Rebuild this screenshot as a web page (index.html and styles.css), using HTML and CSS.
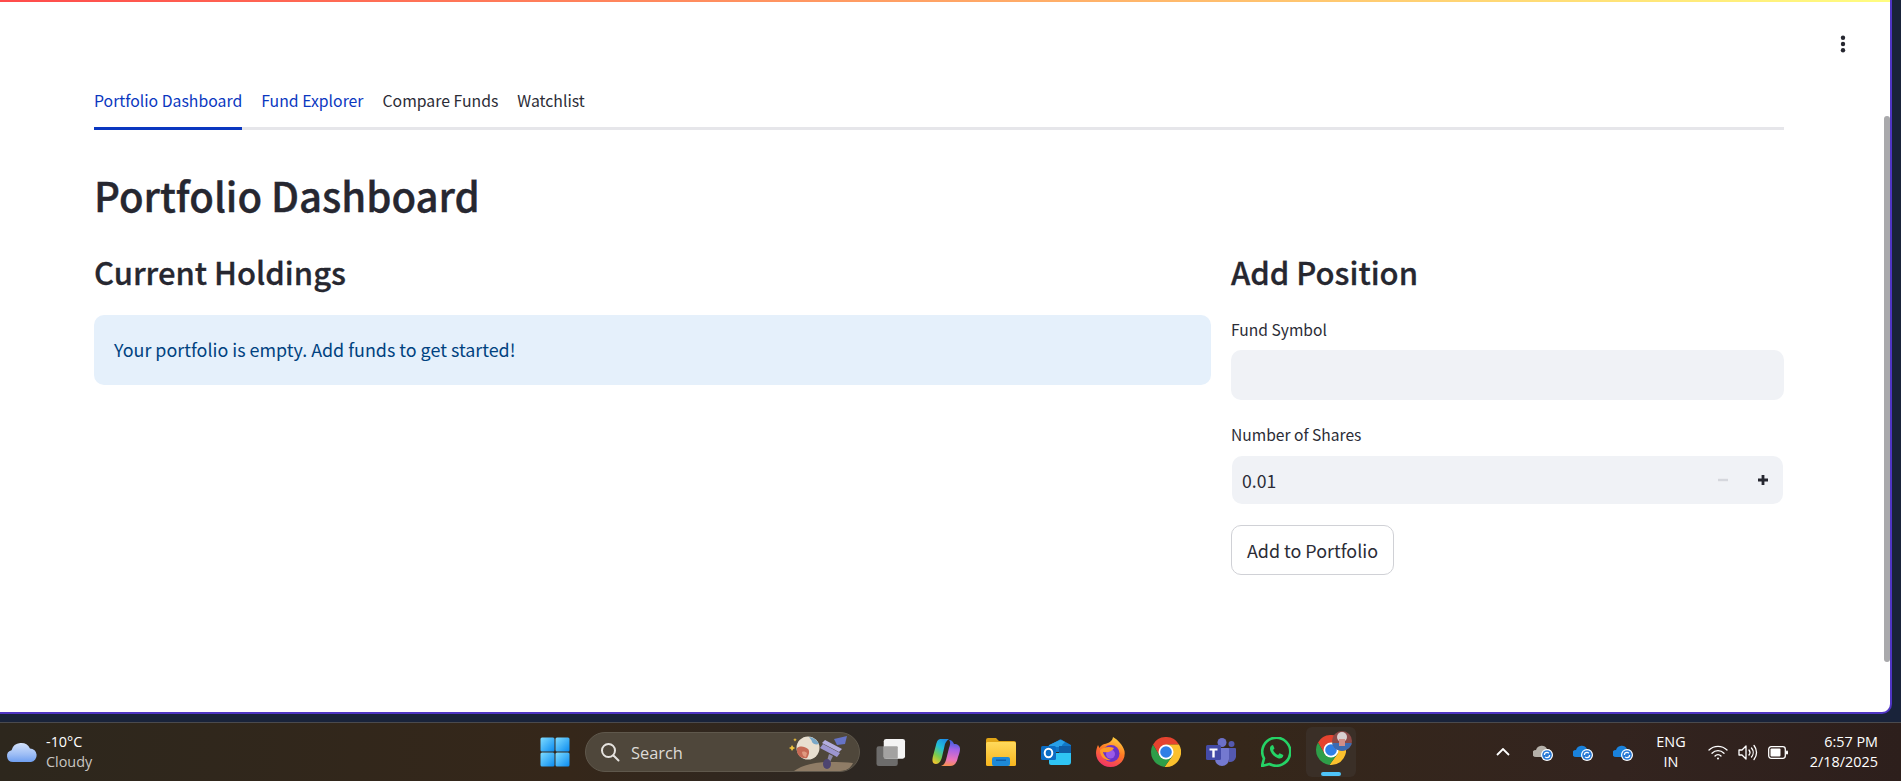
FILE: index.html
```html
<!DOCTYPE html>
<html lang="en">
<head>
<meta charset="utf-8">
<title>Portfolio Dashboard</title>
<link rel="stylesheet" href="styles.css">
</head>
<body>
<div class="window">
  <div class="rainbow"></div>
  <div class="app">
    <div class="toolbar">
      <svg class="kebab" width="8" height="18" viewBox="0 0 8 18"><circle cx="4" cy="2.8" r="2.2"/><circle cx="4" cy="9" r="2.2"/><circle cx="4" cy="15.2" r="2.2"/></svg>
    </div>
    <main class="content">
      <nav class="tabs">
        <a class="tab active">Portfolio Dashboard</a>
        <a class="tab hover">Fund Explorer</a>
        <a class="tab">Compare Funds</a>
        <a class="tab">Watchlist</a>
      </nav>
      <h1 class="title">Portfolio Dashboard</h1>
      <div class="columns">
        <section class="col-main">
          <h2 class="heading">Current Holdings</h2>
          <div class="info"><span class="info-text">Your portfolio is empty. Add funds to get started!</span></div>
        </section>
        <section class="col-side">
          <h2 class="heading">Add Position</h2>
          <label class="label label-first">Fund Symbol</label>
          <div class="field"></div>
          <label class="label label-second">Number of Shares</label>
          <div class="field number">
            <span class="num-value">0.01</span>
            <span class="step off"><svg width="12" height="12" viewBox="0 0 12 12"><rect x="1" y="4.800" width="10" height="2.400"/></svg></span>
            <span class="step"><svg width="12" height="12" viewBox="0 0 12 12"><path d="M4.600 1h2.800v3.600H11v2.800H7.400V11H4.600V7.400H1V4.600h3.600z"/></svg></span>
          </div>
          <button class="btn">Add to Portfolio</button>
        </section>
      </div>
    </main>
    <div class="scrollbar"><div class="thumb"></div></div>
  </div>
</div>
<footer class="taskbar">
  <div class="weather">
    <svg width="32" height="22" viewBox="0 0 32 22"><defs><linearGradient id="cl" x1="0" y1="0" x2="0" y2="1"><stop offset="0" stop-color="#d3e2fb"/><stop offset="0.6" stop-color="#9dbdf5"/><stop offset="1" stop-color="#6f9ff0"/></linearGradient></defs><path d="M7 21a6 6 0 0 1-1.500-11.800A10 10 0 0 1 24 7.500 6.800 6.800 0 0 1 25 21z" fill="url(#cl)"/></svg>
    <div class="weather-text"><span class="temp">-10°C</span><span class="cond">Cloudy</span></div>
  </div>
  <div class="center">
    <span class="slot start"><svg width="30" height="30" viewBox="0 0 30 30"><defs><linearGradient id="wi" x1="0" y1="0" x2="1" y2="1"><stop offset="0" stop-color="#7fdcff"/><stop offset="1" stop-color="#0a8bf0"/></linearGradient></defs><g fill="url(#wi)"><rect x="0.5" y="0.5" width="14" height="14" rx="1.5"/><rect x="15.5" y="0.5" width="14" height="14" rx="1.5"/><rect x="0.5" y="15.5" width="14" height="14" rx="1.5"/><rect x="15.5" y="15.5" width="14" height="14" rx="1.5"/></g></svg></span>
    <div class="search">
      <svg width="20" height="20" viewBox="0 0 20 20" fill="none" stroke="#e6e3df" stroke-width="2"><circle cx="8.5" cy="8.5" r="6.5"/><path d="M13.5 13.5l5 5" stroke-linecap="round"/></svg>
      <span class="search-text">Search</span>
      <svg class="search-art" width="68" height="38" viewBox="0 0 68 38"><path d="M8 38c8-6 22-9 35-9 10 0 18 0 24 1-2 4-5 7-10 8z" fill="#8f7c66"/><circle cx="22" cy="15" r="11.500" fill="#e8dfd0"/><path d="M11 15c4-3 8-1 11 1 2 2 1 6-1 9-5 1-9-2-10-6z" fill="#c56a55"/><path d="M23 4c4 0 8 3 10 7-3 1-6 0-7-2 0-2-2-3-3-5z" fill="#7aa8c8"/><path d="M16 19c2-1 4 0 5 1l-1 4c-2 0-4-2-4-5z" fill="#e09a80"/><path d="M6 12l1.300 2 2 1-2 1-1.300 2-1.100-2-2-1 2-1z" fill="#f0c33c"/><path d="M9 5l.6 1.200 1.200.6-1.200.6L9 8.600l-.6-1.200-1.200-.6 1.200-.6z" fill="#f0c33c"/><path d="M36 10l3-3 17 9-3 3z" fill="#b4aee0"/><path d="M34 15l3-4 17 9-3 4z" fill="#9c95d0"/><path d="M48 6l13-3-2 8-8 1z" fill="#6673c6"/><path d="M43 21l4 2-3 6-3-1z" fill="#8c88a8"/><ellipse cx="41" cy="31" rx="4" ry="5" fill="#4d4470"/></svg>
    </div>
    <span class="slot taskview"><svg width="31" height="29" viewBox="0 0 31 29"><rect x="0.500" y="8" width="22" height="20.500" rx="2.500" fill="#6d6c6b"/><rect x="8" y="0.500" width="22" height="20.500" rx="2.500" fill="#f4f4f4"/><rect x="8" y="8" width="14.500" height="13" rx="1" fill="#a3a2a1"/></svg></span>
    <span class="slot"><svg width="28" height="27" viewBox="0 0 28 27"><defs><linearGradient id="co1" x1="0.700" y1="0" x2="0.200" y2="1"><stop offset="0" stop-color="#1d8fe8"/><stop offset="0.350" stop-color="#22c0d8"/><stop offset="0.700" stop-color="#7ccb4c"/><stop offset="1" stop-color="#f2c62e"/></linearGradient><linearGradient id="co2" x1="0.500" y1="0" x2="0.400" y2="1"><stop offset="0" stop-color="#3360e0"/><stop offset="0.350" stop-color="#a662e6"/><stop offset="0.750" stop-color="#ec74b8"/><stop offset="1" stop-color="#f59050"/></linearGradient></defs><path d="M9 0h8c-2 1-3 3-4 5l-3 13c-1 4-3 7-6 7-4 0-4-4-3-8L4 6C5 2 6 0 9 0z" fill="url(#co1)"/><path d="M17 1c3 0 4 2 5 4 4 0 6 2 6 5s-1 5-2 8c-1 5-3 9-8 9h-9c3-1 4-3 5-6l3-12c1-3 2-6 0-8z" fill="url(#co2)"/></svg></span>
    <span class="slot"><svg width="30" height="28" viewBox="0 0 30 28"><defs><linearGradient id="fo" x1="0" y1="0" x2="0" y2="1"><stop offset="0" stop-color="#ffd95c"/><stop offset="1" stop-color="#f6b51e"/></linearGradient></defs><path d="M0 2a2 2 0 0 1 2-2h8l3 3h15a2 2 0 0 1 2 2v3H0z" fill="#e0a416"/><rect y="4" width="30" height="24" rx="1.500" fill="url(#fo)"/><rect x="6" y="19" width="18" height="9" rx="2" fill="#1d89d8"/><rect x="10" y="21.500" width="10" height="1.500" fill="#0f5fa8"/></svg></span>
    <span class="slot"><svg width="30" height="26" viewBox="0 0 30 26"><path d="M7 7l11-6c1-1 2-1 3 0l9 5v7H7z" fill="#1178c8"/><path d="M8 6l11-5c1 0 2 0 3 1l2 1-3 3v2H8z" fill="#28a0e8"/><path d="M18 7h12v7H18z" fill="#0f5da6"/><path d="M8 14h22v9a3 3 0 0 1-3 3H10a2 2 0 0 1-2-2z" fill="#2fc4f4"/><rect y="7" width="15" height="14" rx="1.500" fill="#0c6dc4"/><ellipse cx="7.500" cy="14" rx="3.800" ry="4.300" fill="none" stroke="#fff" stroke-width="2"/></svg></span>
    <span class="slot"><svg width="29" height="30" viewBox="0 0 29 30"><defs><linearGradient id="ff" x1="0.700" y1="0" x2="0.300" y2="1"><stop offset="0" stop-color="#ffd23e"/><stop offset="0.450" stop-color="#ff7a24"/><stop offset="1" stop-color="#f0306a"/></linearGradient></defs><path d="M17 0c5 3 10 8 11.500 14C30 23 23 30 14.500 30 6.500 30 0 24 0 16c0-3 1-6 2-8l1.500 3c1-2 3-3.500 5-4 3.500-.5 8-2.500 8.500-7z" fill="url(#ff)"/><circle cx="15" cy="16.500" r="8.500" fill="#6a32c8"/><circle cx="14.500" cy="17" r="4.500" fill="#9a5ae8"/><path d="M4 13c4-3 9-4 14-2-2 3-5 5-11 4 1 4 4 7 8 8-6 1-11-3-11-10z" fill="#ff9a26"/></svg></span>
    <span class="slot"><svg width="30" height="30" viewBox="0 0 30 30"><path d="M15 7.500H28A15 15 0 0 0 2 7.500L8.500 18.800z" fill="#e5432f"/><path d="M15 7.500H28A15 15 0 0 1 13.500 29.900L21.500 18.800z" fill="#fbc02d"/><path d="M8.500 18.800L2 7.500A15 15 0 0 0 13.500 29.900L21.500 18.800z" fill="#2e9e49"/><circle cx="15" cy="15" r="7.500" fill="#fff"/><circle cx="15" cy="15" r="5.800" fill="#2f7fe6"/></svg></span>
    <span class="slot"><svg width="30" height="28" viewBox="0 0 30 28"><circle cx="16" cy="4.500" r="4.500" fill="#6c70c8"/><circle cx="25.500" cy="6" r="3" fill="#5459b0"/><path d="M21 10h8a1 1 0 0 1 1 1v8a6 6 0 0 1-7 5z" fill="#5459b0"/><path d="M9 10h13a1 1 0 0 1 1 1v10a7 7 0 0 1-14 0z" fill="#7479d0"/><rect y="7" width="15" height="15" rx="1.500" fill="#444ba8"/><path d="M3.500 10.500h8v2H8.700v7H6.300v-7H3.500z" fill="#fff"/></svg></span>
    <span class="slot"><svg width="30" height="30" viewBox="0 0 30 30"><path d="M1 29l2-7.500A14 14 0 1 1 8.500 27z" fill="none" stroke="#25d366" stroke-width="2.600" stroke-linejoin="round"/><path d="M10.500 8.500c-1.500 1-2 3-1 5.500 1.500 3.500 4 6 7.500 7.200 2.300.8 4.300 0 5-1.700l.3-1.500-3.700-1.800-1.500 1.800c-2.300-.8-4-2.600-5-5l1.400-1.500-1.500-3.500z" fill="#25d366"/></svg></span>
    <span class="slot current">
      <svg width="30" height="30" viewBox="0 0 30 30"><path d="M15 7.500H28A15 15 0 0 0 2 7.500L8.500 18.800z" fill="#e5432f"/><path d="M15 7.500H28A15 15 0 0 1 13.500 29.900L21.500 18.800z" fill="#fbc02d"/><path d="M8.500 18.800L2 7.500A15 15 0 0 0 13.500 29.900L21.500 18.800z" fill="#2e9e49"/><circle cx="15" cy="15" r="7.500" fill="#fff"/><circle cx="15" cy="15" r="5.800" fill="#2f7fe6"/></svg>
      <svg class="avatar" width="20" height="20" viewBox="0 0 20 20"><defs><clipPath id="av"><circle cx="10" cy="10" r="10"/></clipPath></defs><g clip-path="url(#av)"><rect width="20" height="20" fill="#8c4a48"/><rect y="12" width="20" height="8" fill="#3d6bb0"/><circle cx="10" cy="6" r="5" fill="#d9cfd0"/><rect x="7" y="8" width="6" height="7" fill="#d08e88"/></g></svg>
      <span class="indicator"></span>
    </span>
  </div>
  <div class="tray">
    <svg class="caret" width="14" height="8" viewBox="0 0 14 8" fill="none" stroke="#fff" stroke-width="1.800"><path d="M1 7l6-6 6 6"/></svg>
    <span class="cloud-icon first"><svg width="20" height="17" viewBox="0 0 20 17"><path d="M3 13a3.500 3.500 0 0 1 0-7 6 6 0 0 1 11-1 4 4 0 0 1 1 8z" fill="#b5b0a9"/><circle cx="14" cy="11" r="6" fill="#fff"/><circle cx="14" cy="11" r="4.800" fill="#2a7ad6"/><circle cx="14" cy="11" r="2.600" fill="none" stroke="#fff" stroke-width="1.200" stroke-dasharray="6 2"/></svg></span>
    <span class="cloud-icon"><svg width="20" height="17" viewBox="0 0 20 17"><path d="M3 13a3.500 3.500 0 0 1 0-7 6 6 0 0 1 11-1 4 4 0 0 1 1 8z" fill="#1a82dc"/><circle cx="14" cy="11" r="6" fill="#fff"/><circle cx="14" cy="11" r="4.800" fill="#2a7ad6"/><circle cx="14" cy="11" r="2.600" fill="none" stroke="#fff" stroke-width="1.200" stroke-dasharray="6 2"/></svg></span>
    <span class="cloud-icon"><svg width="20" height="17" viewBox="0 0 20 17"><path d="M3 13a3.500 3.500 0 0 1 0-7 6 6 0 0 1 11-1 4 4 0 0 1 1 8z" fill="#1a82dc"/><circle cx="14" cy="11" r="6" fill="#fff"/><circle cx="14" cy="11" r="4.800" fill="#2a7ad6"/><circle cx="14" cy="11" r="2.600" fill="none" stroke="#fff" stroke-width="1.200" stroke-dasharray="6 2"/></svg></span>
    <div class="lang"><span>ENG</span><span>IN</span></div>
    <svg class="wifi" width="20" height="15" viewBox="0 0 20 15" fill="none" stroke="#fff" stroke-width="1.300" stroke-linecap="round"><path d="M1 5a13 13 0 0 1 18 0"/><path d="M4 8.200a8.500 8.500 0 0 1 12 0"/><path d="M7 11a4 4 0 0 1 6 0"/><circle cx="10" cy="13.500" r="1" fill="#fff" stroke="none"/></svg>
    <svg class="speaker" width="20" height="17" viewBox="0 0 20 17" fill="none" stroke="#fff" stroke-width="1.300" stroke-linecap="round"><path d="M1 6v5h3l4 4V2L4 6z" stroke-linejoin="round"/><path d="M11 6a4 4 0 0 1 0 5"/><path d="M13.500 4a7 7 0 0 1 0 9"/><path d="M16 1.500a11 11 0 0 1 0 14"/></svg>
    <svg class="battery" width="20" height="13" viewBox="0 0 20 13"><rect x="0.700" y="0.700" width="16.600" height="11.600" rx="2.500" fill="none" stroke="#fff" stroke-width="1.300"/><rect x="2.500" y="2.500" width="10" height="8" rx="1" fill="#fff"/><rect x="18" y="4.500" width="2" height="4" rx="1" fill="#fff"/></svg>
    <div class="clock"><span>6:57 PM</span><span>2/18/2025</span></div>
  </div>
</footer>
</body>
</html>
```

FILE: styles.css
```css
* { box-sizing: border-box; }
html, body { margin: 0; height: 100%; overflow: hidden; }
body {
  background: #19233a;
  font-family: "Noto Sans CJK SC", "Noto Sans", sans-serif;
  display: flex;
  flex-direction: column;
  height: 781px;
}
.window {
  width: 1892px;
  height: 714px;
  background: #fff;
  border-right: 2px solid #4f35c4;
  border-bottom: 2px solid #4f35c4;
  border-bottom-right-radius: 10px;
  overflow: hidden;
  flex: none;
}
.rainbow { height: 2px; background: linear-gradient(90deg, #ff4b4b, #fffd80); }
.app { display: flex; height: 710px; position: relative; }
.toolbar { position: absolute; top: 33px; right: 43px; }
.kebab { display: block; fill: #262730; }
.content { width: 1884px; padding: 0 100px 0 94px; }
.tabs {
  display: flex;
  gap: 19px;
  margin-top: 73px;
  border-bottom: 3px solid #e6e6ea;
  box-sizing: content-box;
  height: 52px;
}
.tab {
  font-size: 15.800px;
  line-height: 26px;
  color: #2b2c36;
  height: 55px;
  padding-top: 13px;
  white-space: nowrap;
}
.tab.active { color: #0a37c0; border-bottom: 3px solid #0a37c0; }
.tab.hover { color: #0a37c0; }
.title {
  margin: 35px 0 0;
  font-size: 40.100px;
  line-height: 60px;
  font-weight: 500;
  -webkit-text-stroke: 0.4px #262730;
  color: #262730;
}
.columns { display: flex; gap: 20px; margin-top: 24px; }
.col-main { flex: none; width: 1117px; }
.col-side { flex: none; width: 553px; display: flex; flex-direction: column; align-items: flex-start; }
.heading {
  margin: 0;
  font-size: 31px;
  line-height: 46px;
  font-weight: 500;
  -webkit-text-stroke: 0.3px #262730;
  color: #262730;
}
.info {
  margin-top: 20px;
  height: 70px;
  padding: 0 20px 2px;
  display: flex;
  align-items: center;
  background: #e5f0fb;
  border-radius: 10px;
  color: #004280;
  font-size: 17.900px;
}
.label { font-size: 15.600px; line-height: 24px; color: #2b2c36; }
.label-first { margin-top: 22px; }
.label-second { margin-top: 22px; }
.field {
  width: 100%;
  height: 50px;
  margin-top: 9px;
  background: #f0f2f6;
  border-radius: 10px;
}
.number {
  display: flex;
  align-items: center;
  width: 551px;
  margin-left: 1px;
  margin-top: 10px;
  height: 48px;
  padding-left: 10px;
  font-size: 17.600px;
  color: #2b2c36;
}
.num-value { flex: 1; }
.step { width: 40px; display: flex; justify-content: center; align-items: center; }
.step svg { display: block; fill: #262730; }
.step.off svg { fill: #d5d7dd; }
.btn {
  margin-top: 21px;
  width: 163px;
  height: 50px;
  background: #fff;
  border: 1px solid #d0d1d6;
  border-radius: 10px;
  font-family: inherit;
  font-size: 17.900px;
  color: #2b2c36;
  padding: 0;
}
.scrollbar { width: 6px; height: 100%; padding-top: 114px; }
.thumb { height: 546px; background: #a9a9ac; border-radius: 4px; }

.taskbar {
  margin-top: 8px;
  height: 59px;
  flex: none;
  border-top: 1px solid #4a4a4e;
  background: linear-gradient(90deg, #2d271d 0%, #35271a 30%, #2d2722 45%, #35271a 65%, #33241f 85%, #2d1f1c 100%);
  color: #fff;
  font-family: "Open Sans", "Noto Sans", sans-serif;
  display: flex;
  align-items: center;
}
.weather { display: flex; align-items: center; width: 540px; padding-left: 6px; gap: 8px; flex: none; }
.weather svg { display: block; }
.weather-text { display: flex; flex-direction: column; font-size: 14.400px; line-height: 20px; }
.cond { color: #c9c6c2; }
.center { display: flex; align-items: center; flex: none; width: 956px; }
.slot { width: 55px; display: flex; justify-content: center; align-items: center; flex: none; }
.start { width: 30px; margin-right: 15px; }
.taskview { width: 30px; margin: 0 12px 0 16px; }
.slot svg { display: block; }
.search {
  width: 275px;
  height: 40px;
  border-radius: 20px;
  background: #4f473b;
  border: 1px solid #5f584c;
  display: flex;
  align-items: center;
  padding-left: 14px;
  position: relative;
  overflow: hidden;
  flex: none;
}
.search-text { margin-left: 11px; font-size: 16.400px; color: #dedbd7; }
.search-art { position: absolute; right: 5px; top: 0; }
.current {
  height: 50px;
  width: 50px;
  margin-left: 3px;
  background: #3a2f27;
  border-radius: 6px;
  position: relative;
  padding-bottom: 4px;
}
.avatar { position: absolute; left: 26px; top: 4px; }
.indicator { position: absolute; left: 15px; bottom: 1px; width: 20px; height: 4px; border-radius: 2px; background: #4fc3f7; }
.tray { display: flex; align-items: center; flex: none; }
.caret { display: block; }
.cloud-icon { margin-left: 20px; display: block; }
.cloud-icon svg { display: block; }
.cloud-icon.first { margin-left: 23px; }
.lang { display: flex; flex-direction: column; align-items: center; width: 40px; margin-left: 18px; font-size: 14.400px; line-height: 20px; }
.wifi { display: block; margin-left: 17px; }
.speaker { display: block; margin-left: 10px; }
.battery { display: block; margin-left: 10px; }
.clock { display: flex; flex-direction: column; align-items: flex-end; width: 90px; font-size: 14.400px; line-height: 20px; }
```
